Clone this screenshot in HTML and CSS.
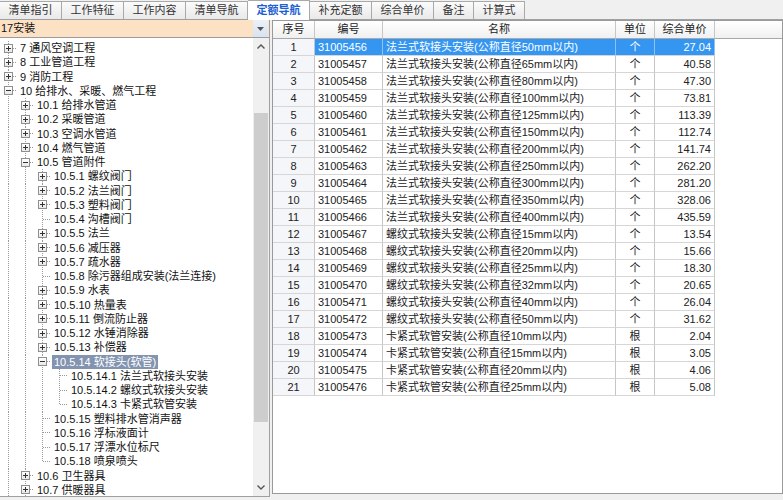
FILE: index.html
```html
<!DOCTYPE html>
<html lang="zh-CN">
<head>
<meta charset="utf-8">
<title>定额导航</title>
<link rel="stylesheet" href="styles.css">
</head>
<body>
<div class="tabs">
  <div class="tab">清单指引</div>
  <div class="tab">工作特征</div>
  <div class="tab">工作内容</div>
  <div class="tab">清单导航</div>
  <div class="tab active">定额导航</div>
  <div class="tab">补充定额</div>
  <div class="tab">综合单价</div>
  <div class="tab">备注</div>
  <div class="tab">计算式</div>
</div>
<div class="main">
  <div class="left">
    <div class="combo">
      <span class="combo-text">17安装</span>
      <span class="combo-btn"><svg width="7" height="4" viewBox="0 0 7 4"><path d="M0 0h7L3.5 4z" fill="#555"/></svg></span>
    </div>
    <div class="treebox">
      <div class="tree">
        <div class="trow"><span class="g t"><i class="bx p"></i></span><span class="lbl">7 通风空调工程</span></div>
        <div class="trow"><span class="g t"><i class="bx p"></i></span><span class="lbl">8 工业管道工程</span></div>
        <div class="trow"><span class="g t"><i class="bx p"></i></span><span class="lbl">9 消防工程</span></div>
        <div class="trow"><span class="g t"><i class="bx"></i></span><span class="lbl">10 给排水、采暖、燃气工程</span></div>
        <div class="trow"><span class="g v"></span><span class="g t"><i class="bx p"></i></span><span class="lbl">10.1 给排水管道</span></div>
        <div class="trow"><span class="g v"></span><span class="g t"><i class="bx p"></i></span><span class="lbl">10.2 采暖管道</span></div>
        <div class="trow"><span class="g v"></span><span class="g t"><i class="bx p"></i></span><span class="lbl">10.3 空调水管道</span></div>
        <div class="trow"><span class="g v"></span><span class="g t"><i class="bx p"></i></span><span class="lbl">10.4 燃气管道</span></div>
        <div class="trow"><span class="g v"></span><span class="g t"><i class="bx"></i></span><span class="lbl">10.5 管道附件</span></div>
        <div class="trow"><span class="g v"></span><span class="g v"></span><span class="g t"><i class="bx p"></i></span><span class="lbl">10.5.1 螺纹阀门</span></div>
        <div class="trow"><span class="g v"></span><span class="g v"></span><span class="g t"><i class="bx p"></i></span><span class="lbl">10.5.2 法兰阀门</span></div>
        <div class="trow"><span class="g v"></span><span class="g v"></span><span class="g t"><i class="bx p"></i></span><span class="lbl">10.5.3 塑料阀门</span></div>
        <div class="trow"><span class="g v"></span><span class="g v"></span><span class="g t"></span><span class="lbl">10.5.4 沟槽阀门</span></div>
        <div class="trow"><span class="g v"></span><span class="g v"></span><span class="g t"><i class="bx p"></i></span><span class="lbl">10.5.5 法兰</span></div>
        <div class="trow"><span class="g v"></span><span class="g v"></span><span class="g t"><i class="bx p"></i></span><span class="lbl">10.5.6 减压器</span></div>
        <div class="trow"><span class="g v"></span><span class="g v"></span><span class="g t"><i class="bx p"></i></span><span class="lbl">10.5.7 疏水器</span></div>
        <div class="trow"><span class="g v"></span><span class="g v"></span><span class="g t"></span><span class="lbl">10.5.8 除污器组成安装(法兰连接)</span></div>
        <div class="trow"><span class="g v"></span><span class="g v"></span><span class="g t"><i class="bx p"></i></span><span class="lbl">10.5.9 水表</span></div>
        <div class="trow"><span class="g v"></span><span class="g v"></span><span class="g t"><i class="bx p"></i></span><span class="lbl">10.5.10 热量表</span></div>
        <div class="trow"><span class="g v"></span><span class="g v"></span><span class="g t"><i class="bx p"></i></span><span class="lbl">10.5.11 倒流防止器</span></div>
        <div class="trow"><span class="g v"></span><span class="g v"></span><span class="g t"><i class="bx p"></i></span><span class="lbl">10.5.12 水锤消除器</span></div>
        <div class="trow"><span class="g v"></span><span class="g v"></span><span class="g t"><i class="bx p"></i></span><span class="lbl">10.5.13 补偿器</span></div>
        <div class="trow"><span class="g v"></span><span class="g v"></span><span class="g t"><i class="bx"></i></span><span class="lbl sel">10.5.14 软接头(软管)</span></div>
        <div class="trow"><span class="g v"></span><span class="g v"></span><span class="g v"></span><span class="g t"></span><span class="lbl">10.5.14.1 法兰式软接头安装</span></div>
        <div class="trow"><span class="g v"></span><span class="g v"></span><span class="g v"></span><span class="g t"></span><span class="lbl">10.5.14.2 螺纹式软接头安装</span></div>
        <div class="trow"><span class="g v"></span><span class="g v"></span><span class="g v"></span><span class="g e"></span><span class="lbl">10.5.14.3 卡紧式软管安装</span></div>
        <div class="trow"><span class="g v"></span><span class="g v"></span><span class="g t"></span><span class="lbl">10.5.15 塑料排水管消声器</span></div>
        <div class="trow"><span class="g v"></span><span class="g v"></span><span class="g t"></span><span class="lbl">10.5.16 浮标液面计</span></div>
        <div class="trow"><span class="g v"></span><span class="g v"></span><span class="g t"></span><span class="lbl">10.5.17 浮漂水位标尺</span></div>
        <div class="trow"><span class="g v"></span><span class="g v"></span><span class="g e"></span><span class="lbl">10.5.18 喷泉喷头</span></div>
        <div class="trow"><span class="g v"></span><span class="g t"><i class="bx p"></i></span><span class="lbl">10.6 卫生器具</span></div>
        <div class="trow"><span class="g v"></span><span class="g t"><i class="bx p"></i></span><span class="lbl">10.7 供暖器具</span></div>
      </div>
      <div class="vscroll">
        <div class="sb-btn"><svg width="8" height="5" viewBox="0 0 8 5"><path d="M0.5 4.5L4 1L7.5 4.5" fill="none" stroke="#555" stroke-width="1.4"/></svg></div>
        <div class="sb-track"><div class="sb-thumb"></div></div>
        <div class="sb-btn"><svg width="8" height="5" viewBox="0 0 8 5"><path d="M0.5 0.5L4 4L7.5 0.5" fill="none" stroke="#555" stroke-width="1.4"/></svg></div>
      </div>
    </div>
  </div>
  <div class="right">
    <div class="r h"><span>序号</span><span>编号</span><span>名称</span><span>单位</span><span>综合单价</span><span class="fill"></span></div>
    <div class="r cur"><span>1</span><span>31005456</span><span>法兰式软接头安装(公称直径50mm以内)</span><span>个</span><span>27.04</span></div>
    <div class="r"><span>2</span><span>31005457</span><span>法兰式软接头安装(公称直径65mm以内)</span><span>个</span><span>40.58</span></div>
    <div class="r"><span>3</span><span>31005458</span><span>法兰式软接头安装(公称直径80mm以内)</span><span>个</span><span>47.30</span></div>
    <div class="r"><span>4</span><span>31005459</span><span>法兰式软接头安装(公称直径100mm以内)</span><span>个</span><span>73.81</span></div>
    <div class="r"><span>5</span><span>31005460</span><span>法兰式软接头安装(公称直径125mm以内)</span><span>个</span><span>113.39</span></div>
    <div class="r"><span>6</span><span>31005461</span><span>法兰式软接头安装(公称直径150mm以内)</span><span>个</span><span>112.74</span></div>
    <div class="r"><span>7</span><span>31005462</span><span>法兰式软接头安装(公称直径200mm以内)</span><span>个</span><span>141.74</span></div>
    <div class="r"><span>8</span><span>31005463</span><span>法兰式软接头安装(公称直径250mm以内)</span><span>个</span><span>262.20</span></div>
    <div class="r"><span>9</span><span>31005464</span><span>法兰式软接头安装(公称直径300mm以内)</span><span>个</span><span>281.20</span></div>
    <div class="r"><span>10</span><span>31005465</span><span>法兰式软接头安装(公称直径350mm以内)</span><span>个</span><span>328.06</span></div>
    <div class="r"><span>11</span><span>31005466</span><span>法兰式软接头安装(公称直径400mm以内)</span><span>个</span><span>435.59</span></div>
    <div class="r"><span>12</span><span>31005467</span><span>螺纹式软接头安装(公称直径15mm以内)</span><span>个</span><span>13.54</span></div>
    <div class="r"><span>13</span><span>31005468</span><span>螺纹式软接头安装(公称直径20mm以内)</span><span>个</span><span>15.66</span></div>
    <div class="r"><span>14</span><span>31005469</span><span>螺纹式软接头安装(公称直径25mm以内)</span><span>个</span><span>18.30</span></div>
    <div class="r"><span>15</span><span>31005470</span><span>螺纹式软接头安装(公称直径32mm以内)</span><span>个</span><span>20.65</span></div>
    <div class="r"><span>16</span><span>31005471</span><span>螺纹式软接头安装(公称直径40mm以内)</span><span>个</span><span>26.04</span></div>
    <div class="r"><span>17</span><span>31005472</span><span>螺纹式软接头安装(公称直径50mm以内)</span><span>个</span><span>31.62</span></div>
    <div class="r"><span>18</span><span>31005473</span><span>卡紧式软管安装(公称直径10mm以内)</span><span>根</span><span>2.04</span></div>
    <div class="r"><span>19</span><span>31005474</span><span>卡紧式软管安装(公称直径15mm以内)</span><span>根</span><span>3.05</span></div>
    <div class="r"><span>20</span><span>31005475</span><span>卡紧式软管安装(公称直径20mm以内)</span><span>根</span><span>4.06</span></div>
    <div class="r"><span>21</span><span>31005476</span><span>卡紧式软管安装(公称直径25mm以内)</span><span>根</span><span>5.08</span></div>
  </div>
</div>
</body>
</html>
```
FILE: styles.css
```css
* { box-sizing: border-box; }
html, body { margin: 0; padding: 0; }
body {
  width: 783px;
  height: 500px;
  overflow: hidden;
  background: #f0f0f0;
  color: #111;
  font-family: "Liberation Sans", "Noto Sans CJK SC", sans-serif;
  font-size: 11px;
  line-height: 1;
}

/* tabs */
.tabs {
  display: flex;
  align-items: flex-end;
  height: 20px;
  border-bottom: 1px solid #a0a0a0;
  background: #f0f0f0;
}
.tab {
  height: 18px;
  line-height: 17px;
  padding: 0 8.5px;
  border: 1px solid #a9a9a9;
  border-left: none;
  border-bottom: none;
  background: linear-gradient(#fbfbfb, #e9e9e9);
  color: #333;
  white-space: nowrap;
}
.tab.active {
  height: 20px;
  line-height: 19px;
  margin-bottom: -1px;
  background: #fff;
  color: #1d5fd1;
  font-weight: bold;
  position: relative;
}

/* main */
.main {
  display: flex;
  gap: 2px;
  height: 477px;
}
.left {
  width: 270px;
  flex: none;
  display: flex;
  flex-direction: column;
}
.combo {
  height: 18px;
  flex: none;
  display: flex;
  align-items: stretch;
  background: #fde1c5;
  border-bottom: 1px solid #9c9c9c;
  border-right: 1px solid #a0a0a0;
}
.combo-text {
  flex: 1;
  padding-left: 1px;
  line-height: 17px;
  color: #111;
}
.combo-btn {
  width: 15px;
  margin-right: 1px;
  display: flex;
  align-items: center;
  justify-content: center;
  background: linear-gradient(#eaf1f8, #d8e3ef);
}

.treebox {
  flex: 1;
  min-height: 0;
  display: flex;
  background: #fff;
  border-right: 1px solid #a0a0a0;
  border-bottom: 1px solid #a0a0a0;
}
.tree {
  flex: 1;
  overflow: hidden;
  padding-top: 3px;
}
.trow {
  display: flex;
  height: 14.25px;
  white-space: nowrap;
}
.g {
  width: 17px;
  flex: none;
  display: flex;
  align-items: center;
  justify-content: center;
}
.g.v {
  background: repeating-linear-gradient(to bottom, #9a9a9a 0 1px, transparent 1px 2px) 8px 0 / 1px 100% no-repeat;
}
.g.t {
  background:
    repeating-linear-gradient(to right, #9a9a9a 0 1px, transparent 1px 2px) 9px 50% / 8px 1px no-repeat,
    repeating-linear-gradient(to bottom, #9a9a9a 0 1px, transparent 1px 2px) 8px 0 / 1px 100% no-repeat;
}
.g.e {
  background:
    repeating-linear-gradient(to right, #9a9a9a 0 1px, transparent 1px 2px) 9px 50% / 8px 1px no-repeat,
    repeating-linear-gradient(to bottom, #9a9a9a 0 1px, transparent 1px 2px) 8px 0 / 1px 50% no-repeat;
}
.bx {
  display: block;
  width: 9px;
  height: 9px;
  border: 1px solid #8f8f8f;
  margin-left: -1px;
  background:
    linear-gradient(#333, #333) center / 5px 1px no-repeat,
    linear-gradient(#fff, #e8e8e8);
}
.bx.p {
  background:
    linear-gradient(#333, #333) center / 5px 1px no-repeat,
    linear-gradient(#333, #333) center / 1px 5px no-repeat,
    linear-gradient(#fff, #e8e8e8);
}
.lbl {
  margin-left: 1px;
  padding: 0 2px;
  line-height: 14px;
  color: #111;
}
.lbl.sel {
  background: #8394b0;
  color: #fff;
}

.vscroll {
  width: 16px;
  flex: none;
  display: flex;
  flex-direction: column;
  background: #f0f0f0;
}
.sb-btn {
  height: 17px;
  flex: none;
  display: flex;
  align-items: center;
  justify-content: center;
}
.sb-track {
  flex: 1;
  display: flex;
  flex-direction: column;
  padding: 58px 1px 57px;
}
.sb-thumb {
  flex: 1;
  background: #cdcdcd;
}

/* right grid */
.right {
  flex: 1;
  margin-bottom: 3px;
  background: #fff;
  border: 1px solid #9a9a9a;
  overflow: hidden;
}
.r {
  display: grid;
  grid-template-columns: 42px 68px 233px 39px 60px;
  height: 17px;
}
.r > span {
  line-height: 16px;
  border-right: 1px solid #c6c6c6;
  border-bottom: 1px solid #d6d6d6;
  white-space: nowrap;
  overflow: hidden;
  color: #222;
}
.r > span:nth-child(1) { text-align: center; background: #f4f6f9; }
.r > span:nth-child(2) { padding-left: 3px; }
.r > span:nth-child(3) { padding-left: 3px; }
.r > span:nth-child(4) { text-align: center; }
.r > span:nth-child(5) { text-align: right; padding-right: 3px; }

.r.h {
  grid-template-columns: 42px 68px 233px 39px 60px 1fr;
  height: 18px;
}
.r.h > span {
  line-height: 17px;
  text-align: center;
  padding: 0;
  background: linear-gradient(#ffffff, #f0f0f0);
  border-right: 1px solid #c6c6c6;
  border-bottom: 1px solid #a8a8a8;
  color: #222;
}
.r.h > span.fill { border-right: none; }

.r.cur > span:nth-child(n+2) {
  background: #3596f2;
  color: #fff;
  border-right-color: #8cc2f4;
}
```
